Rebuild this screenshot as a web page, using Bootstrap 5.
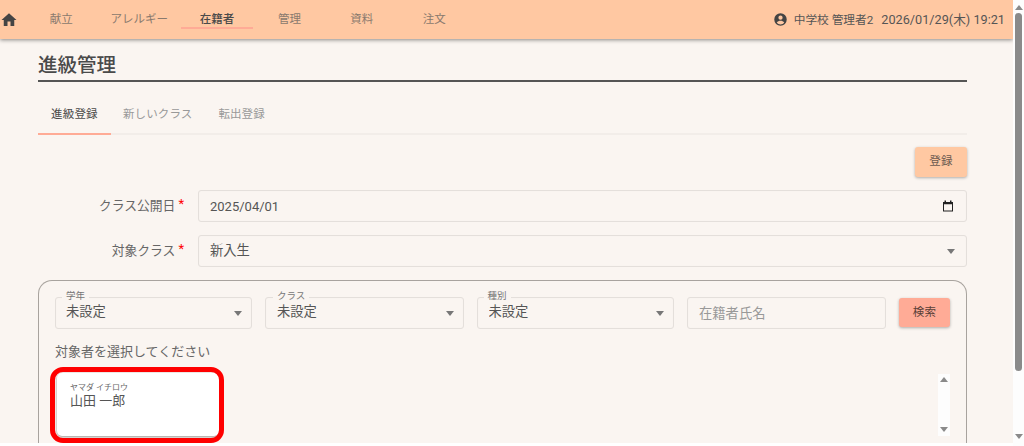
<!DOCTYPE html>
<html lang="ja">
<head>
<meta charset="utf-8">
<title>進級管理</title>
<link rel="stylesheet" href="https://cdn.jsdelivr.net/npm/bootstrap@5.3.0/dist/css/bootstrap.min.css">
<style>
html,body{height:446px;overflow:hidden;background:#fff}
body{font-family:Roboto,"Noto Sans CJK JP",sans-serif;color:#555;font-size:13px}
.shell{height:446px}
.viewport{height:443px;overflow:hidden;background:#faf5f1;width:1013px}
.sbar{width:11px;background:#fdfdfd;height:446px;padding:0 2px}
.sbar-thumb{width:7px;height:358px;background:#8a8a8a;border-radius:4px}
.tri-up,.tri-down{width:0;height:0;border-left:4px solid transparent;border-right:4px solid transparent}
.tri-up{border-bottom:5px solid #8a8a8a}
.tri-down{border-top:5px solid #8a8a8a}
.sbar .tri-up{margin:5px 0 3px -.5px}
.sbar .tri-down{margin:63px 0 0 -.5px}
.topbar{height:39px;background:#ffc8a2;box-shadow:0 1px 4px rgba(0,0,0,.45);position:relative;z-index:2;padding:0 8px 0 0}
.home-ico{width:18px;height:18px;fill:#444;flex:none}
.menu-row{margin-left:7px;height:39px}
.menu-item{min-width:72.4px;padding:5px 13px 0;height:21px;margin-top:8px;display:flex;align-items:center;justify-content:center;font-size:11.5px;color:#8a7a6e;border-bottom:2px solid transparent;text-decoration:none}
.menu-item.on{color:#4a4a4a;font-weight:500;border-bottom-color:#ffab96}
.user-ico{width:15px;height:15px;fill:#444;margin-right:6px}
.user-txt{font-size:11.7px;color:#555;white-space:nowrap}
.user-txt span{margin-left:8px;font-size:12.7px}
.page{padding:0 46px 0 38px}
.title{font-size:19.5px;font-weight:500;color:#4a4a4a;line-height:28px;margin:13px 0 0;padding-bottom:1px;border-bottom:2px solid #555;height:30px}
.tabbar{margin-top:18px;border-bottom:2px solid #f2ede9;height:35px}
.tabbar a{font-size:11.5px;color:#999;padding:0 13px;line-height:29px;height:35px;text-decoration:none;display:block;letter-spacing:.1px}
.tabbar a.on{color:#4a4a4a;border-bottom:2px solid #ffab96;width:73px;letter-spacing:.2px}
.tabbar a+a{padding:0 14px 0 12px}
.btn-save,.btn-find{font-size:11.5px;color:#6b5a50;border:0;border-radius:3px;box-shadow:0 1px 3px rgba(0,0,0,.3);padding:0;letter-spacing:.2px}
.btn-save{background:#ffc8a2;width:52px;height:30px;margin-top:12px}
.btn-find{background:#ffab96;width:51px;height:29px;color:#5a4038;flex:none;margin-top:1px}
.form-line{margin-top:13px}
.lab{width:146px;margin:0 14px 0 0;text-align:right;font-size:12.8px;color:#666;flex:none;white-space:nowrap}
.lab i{color:#f00;font-style:normal;font-size:13px;margin-left:3px;position:relative;top:-2px}
.form-control.fld,.form-select.fld{background-color:#faf5f1;border:1px solid #e4dfdb;border-radius:3px;font-size:13.3px;color:#555;padding:0 11px;box-shadow:inset 0 0 1px rgba(0,0,0,.05)}
.form-control.fld.datefld{font-size:13px}
.form-select.fld{background-image:none;appearance:none}
.selwrap{position:relative}
.selwrap::after{content:"";position:absolute;right:12px;top:50%;margin-top:-2px;border-left:4px solid transparent;border-right:4px solid transparent;border-top:5px solid #777;pointer-events:none}
.tall{height:32px;position:relative}
.tall input{height:32px}
.cal-ico{position:absolute;right:12.5px;top:9px;width:14px;height:14px}
.selwrap select{height:32px;width:100%}
.fld::placeholder{color:#999}
.group-box{border:1px solid #a8a39e;border-bottom:0;border-radius:14px 14px 0 0;margin-top:13px;padding:16px 16px 0;height:200px}
.filter{gap:13px}
.filter .w1{width:197px;flex:none}
.filter .w2{width:198.5px;flex:none}
.filter .w3{width:197.5px;flex:none}
.filter .w4{width:199px;flex:none}
.filter .selwrap::after{right:10px}
.filter .form-select.fld{padding:0 10px 2px}
.filter .w2 .form-select.fld,.filter .w3 .form-select.fld{padding-left:11px}
.float-lab{position:absolute;left:7px;top:-7px;background:#faf5f1;padding:0 4px;font-size:9.5px;line-height:12px;color:#777;z-index:1}
.w2 .float-lab{left:8px}
.pick-lab{margin:14px 0 0;font-size:13px;color:#666;line-height:18px}
.pick-area{margin-top:12px;height:62px;padding-left:2px}
.person{width:162px;height:63px;background:#fff;border-radius:5px;box-shadow:0 1px 3px rgba(0,0,0,.4);padding:10px 13px;position:relative}
.kana{font-size:8px;line-height:9px;color:#666}
.kname{font-size:13px;line-height:16px;color:#555;margin-top:1px}
.annot{position:absolute;left:-7px;top:-6px;width:174px;height:76px;border:5px solid #f00;border-radius:13px}
.mini-sb{width:12px;height:62px;background:#fdfdfd;padding:0 2px;margin-top:1px}
.mini-sb .tri-up{margin:3px 0 45px}
</style>
</head>
<body>
<div class="shell d-flex">
  <div class="viewport">
    <nav class="topbar d-flex align-items-center">
      <svg class="home-ico" viewBox="0 0 24 24"><path d="M10 20v-6h4v6h5v-8h3L12 3 2 12h3v8z"/></svg>
      <div class="menu-row d-flex">
        <a class="menu-item" href="#">献立</a>
        <a class="menu-item" href="#">アレルギー</a>
        <a class="menu-item on" href="#">在籍者</a>
        <a class="menu-item" href="#">管理</a>
        <a class="menu-item" href="#">資料</a>
        <a class="menu-item" href="#">注文</a>
      </div>
      <div class="ms-auto d-flex align-items-center">
        <svg class="user-ico" viewBox="0 0 24 24"><path d="M12 2a10 10 0 1 0 0 20 10 10 0 0 0 0-20zm0 3.6a3.4 3.4 0 1 1 0 6.8 3.4 3.4 0 0 1 0-6.8zm0 14.2a7.7 7.7 0 0 1-6-2.8c1.2-1.9 3.9-2.9 6-2.9s4.8 1 6 2.9a7.7 7.7 0 0 1-6 2.8z"/></svg>
        <div class="user-txt">中学校 管理者2<span>2026/01/29(木) 19:21</span></div>
      </div>
    </nav>
    <main class="page">
      <h1 class="title">進級管理</h1>
      <div class="tabbar d-flex">
        <a class="on" href="#">進級登録</a>
        <a href="#">新しいクラス</a>
        <a href="#">転出登録</a>
      </div>
      <div class="d-flex justify-content-end">
        <button class="btn btn-save" type="button">登録</button>
      </div>
      <div class="d-flex align-items-center form-line">
        <label class="lab">クラス公開日<i>*</i></label>
        <div class="flex-grow-1 tall">
          <input class="form-control fld datefld" type="text" value="2025/04/01">
          <svg class="cal-ico" viewBox="0 0 14 14"><path d="M3.500 1.500H5V3h4V1.500h1.500V3H12v9.500H2V3h1.500zM3 5.200v6.300h8V5.200z" fill="#222" fill-rule="evenodd"/></svg>
        </div>
      </div>
      <div class="d-flex align-items-center form-line">
        <label class="lab">対象クラス<i>*</i></label>
        <div class="flex-grow-1 selwrap"><select class="form-select fld"><option>新入生</option></select></div>
      </div>
      <section class="group-box">
        <div class="d-flex filter">
          <div class="selwrap w1"><span class="float-lab">学年</span><select class="form-select fld"><option>未設定</option></select></div>
          <div class="selwrap w2"><span class="float-lab">クラス</span><select class="form-select fld"><option>未設定</option></select></div>
          <div class="selwrap w3"><span class="float-lab">種別</span><select class="form-select fld"><option>未設定</option></select></div>
          <div class="w4 tall"><input class="form-control fld" type="text" placeholder="在籍者氏名"></div>
          <button class="btn btn-find" type="button">検索</button>
        </div>
        <p class="pick-lab">対象者を選択してください</p>
        <div class="pick-area d-flex justify-content-between">
          <div class="person">
            <div class="kana">ヤマダ イチロウ</div>
            <div class="kname">山田 一郎</div>
            <div class="annot"></div>
          </div>
          <div class="mini-sb"><div class="tri-up"></div><div class="tri-down"></div></div>
        </div>
      </section>
    </main>
  </div>
  <div class="sbar"><div class="tri-up"></div><div class="sbar-thumb"></div><div class="tri-down"></div></div>
</div>
<script src="https://cdn.jsdelivr.net/npm/bootstrap@5.3.0/dist/js/bootstrap.bundle.min.js"></script>
</body>
</html>
